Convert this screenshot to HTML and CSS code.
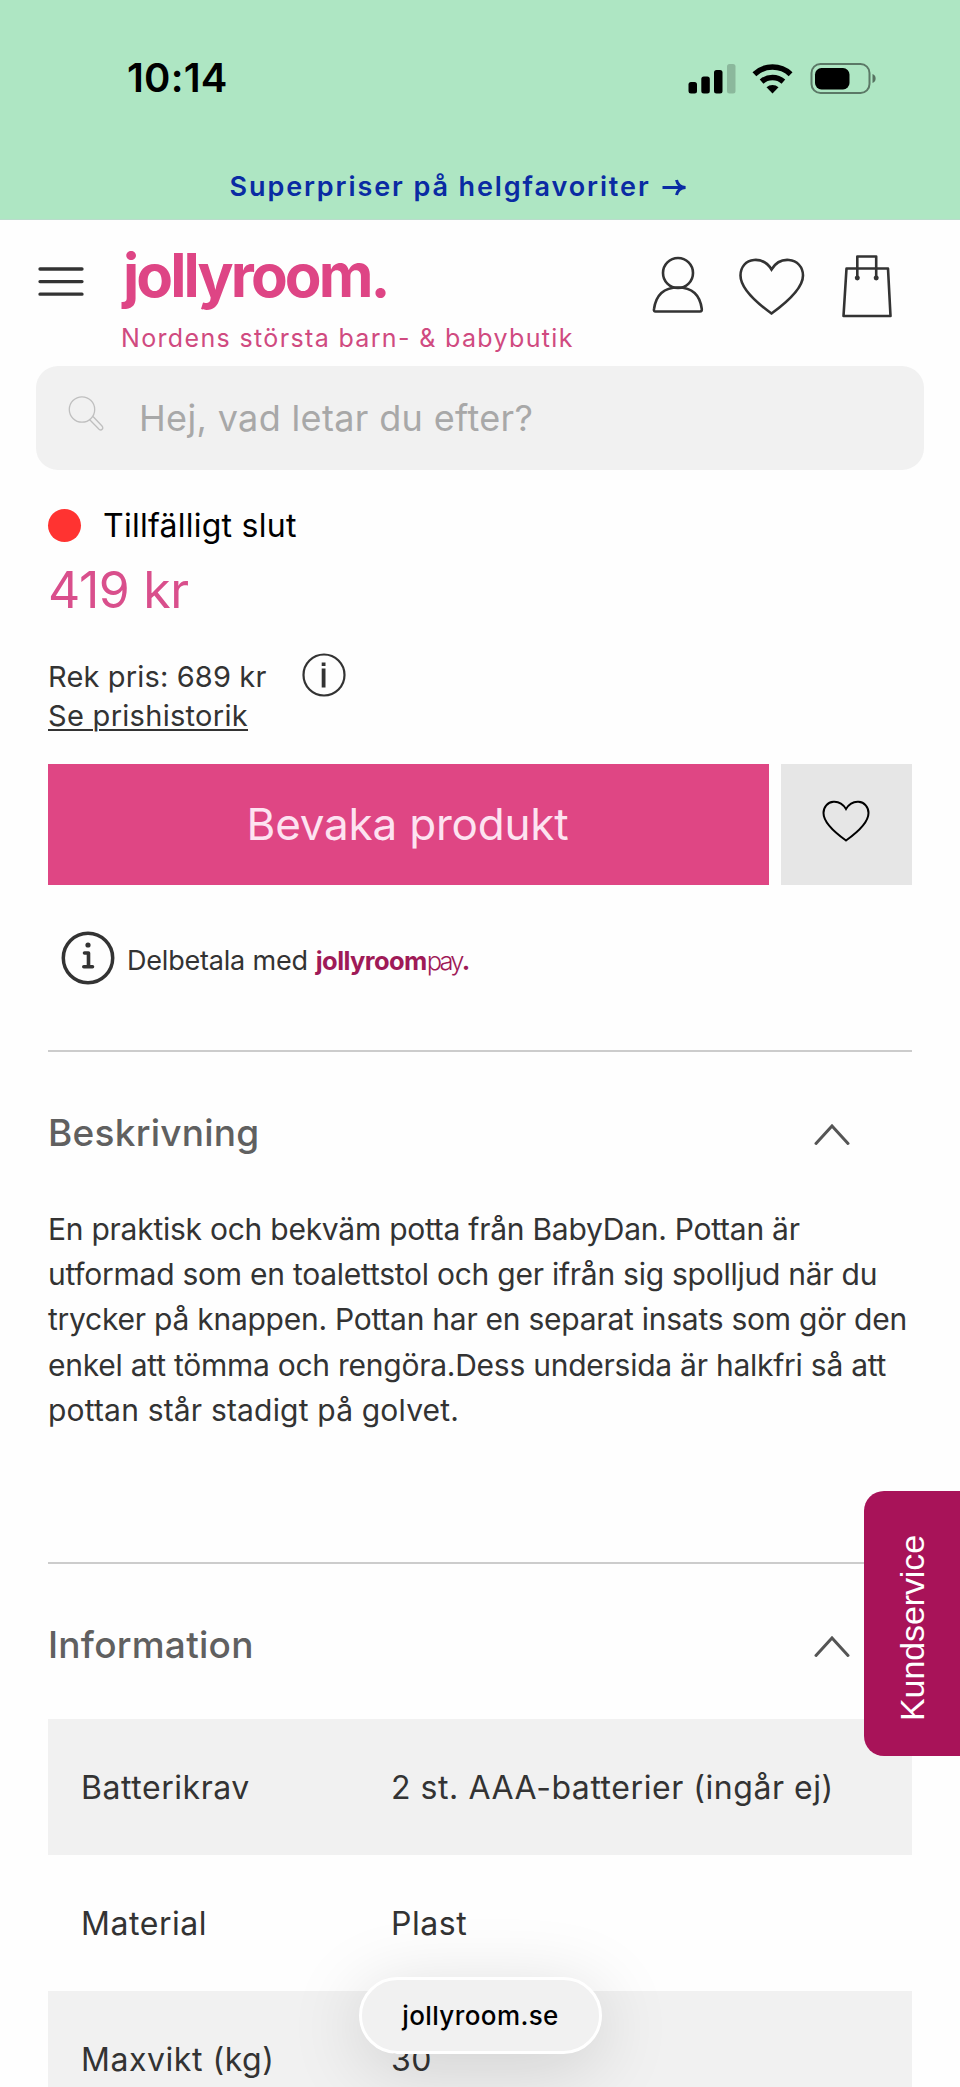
FILE: index.html
```
<!DOCTYPE html>
<html lang="sv">
<head>
<meta charset="utf-8">
<title>Jollyroom</title>
<link rel="stylesheet" href="styles.css">
</head>
<body>
<div class="screen">
  <div class="status">
    <span class="clock">10:14</span>
    <svg class="status-icons" width="192" height="34" viewBox="686 60 192 34">
      <rect x="688.5" y="81" width="8.5" height="11.5" rx="2.5"/>
      <rect x="701.3" y="75.5" width="8.5" height="17" rx="2.5"/>
      <rect x="714" y="69" width="8.5" height="23.5" rx="2.5"/>
      <rect x="727" y="63" width="8.5" height="29.5" rx="2.5" opacity=".2"/>
      <g fill="none" stroke="#000" stroke-width="5.6">
        <path d="M754.4 73.2a26.5 26.5 0 0 1 36.2 0"/>
        <path d="M761.6 80.6a16.5 16.5 0 0 1 21.8 0"/>
      </g>
      <path d="M772.5 92.5l-6-6.200a9 9 0 0 1 12 0z"/>
      <rect x="811.500" y="63" width="58" height="29" rx="9" fill="none" stroke="#000" stroke-width="2" opacity=".48"/>
      <rect x="815" y="67" width="34.500" height="21.500" rx="6.500"/>
      <path d="M872.500 73c4.200 1.500 4.200 7.500 0 9z" opacity=".5"/>
    </svg>
  </div>
  <div class="promo"><span class="promo-text">Superpriser på helgfavoriter</span>
    <svg width="26" height="20" viewBox="0 0 26 20" fill="none" stroke="#0a2ba3" stroke-width="3" ><path d="M1.500 10.500H23M15.500 3Q17 10 24.500 10.500Q17 11 15.500 18"/></svg>
  </div>

  <header class="header">
    <svg class="menu" width="46" height="30" viewBox="0 0 46 30" stroke="#333" stroke-width="3.300" stroke-linecap="round"><path d="M2 2H44M2 14.600H44M2 27.200H44"/></svg>
    <div class="brand">
      <div class="logo">jollyroom.</div>
      <div class="tagline">Nordens största barn- &amp; babybutik</div>
    </div>
    <div class="actions">
      <svg width="56" height="68" viewBox="650 252 56 68"><circle cx="678" cy="273" r="15"/><path d="M655.500 311.500Q653.500 311.500 654 309C656 295 664 287.500 678 287.500S700 295 701.800 309Q702 311.500 700 311.500Z"/></svg>
      <svg width="70" height="68" viewBox="737 252 70 68"><path d="M771.500 269.500C767 262 760 259.500 754 260C746 260.500 740.500 267 740.500 275.500C740.500 289 757 303 771.500 313.500C786 303 803 289 803 275.500C803 267 797 260.500 789 260C783 259.500 776 262 771.500 269.500Z"/></svg>
      <svg class="bag" width="54" height="68" viewBox="840 252 54 68"><path d="M846.500 268.500H888L890.500 316H843.500ZM857.300 277V256.500H876.200V277" stroke-linejoin="round"/><circle cx="857.300" cy="278" r="1.200"/><circle cx="876.200" cy="278" r="1.200"/></svg>
    </div>
  </header>

  <div class="search">
    <svg width="36" height="36" viewBox="68 395 36 36" fill="none" stroke="#bfbfbf" stroke-width="1.300"><circle cx="82" cy="409.500" r="12.700"/><path d="M89.500 419.500L99 429.300C101.500 431.200 104 428.500 102 426L93 416.500"/></svg>
    <span>Hej, vad letar du efter?</span>
  </div>

  <main class="product">
    <div class="stock"><span class="dot"></span>Tillfälligt slut</div>
    <div class="price">419 kr</div>
    <div class="rrp">Rek pris: 689 kr
      <svg width="44" height="44" viewBox="0 0 44 44"><circle cx="22" cy="22" r="20.500" fill="none" stroke="#333" stroke-width="2.200"/><path d="M19.700 9.500h3.800v3.500h-3.800zM19.700 15.500h3.800v19h-3.800z" fill="#333"/></svg>
    </div>
    <a class="history">Se prishistorik</a>
    <div class="buy">
      <div class="watch">Bevaka produkt</div>
      <div class="fav"><svg width="50" height="44" viewBox="0 0 50 44" fill="none" stroke="#000" stroke-width="2"><path d="M25 11C21.700 5.600 17 3.500 12.500 3.800C6.500 4.200 2.500 9 2.500 15C2.500 25 14.500 35 25 42.500C35.500 35 47.500 25 47.500 15C47.500 9 43.500 4.200 37.500 3.800C33 3.500 28.300 5.600 25 11Z"/></svg></div>
    </div>
    <div class="paylater">
      <svg width="54" height="54" viewBox="0 0 54 54"><circle cx="27" cy="27" r="24.700" fill="none" stroke="#333" stroke-width="3.500"/><circle cx="27" cy="14" r="2.600" fill="#333"/><path d="M23.500 22H27.500V35.700M22.800 35.700H31.500" fill="none" stroke="#333" stroke-width="3.600" stroke-linecap="round" stroke-linejoin="round"/></svg>
      <span class="paylater-text">Delbetala med</span>
      <span class="paylogo"><b>jollyroom</b>pay<b>.</b></span>
    </div>

    <section class="section">
      <h2 class="heading">Beskrivning <svg class="chevron" width="36" height="24" viewBox="0 0 36 24"><path d="M2 20.500L18 3L34 20.500"/></svg></h2>
      <p class="text">En praktisk och bekväm potta från BabyDan. Pottan är<br>utformad som en toalettstol och ger ifrån sig spolljud när du<br>trycker på knappen. Pottan har en separat insats som gör den<br>enkel att tömma och rengöra.Dess undersida är halkfri så att<br><span class="text-end">pottan står stadigt på golvet.</span></p>
    </section>

    <section class="section">
      <h2 class="heading">Information <svg class="chevron" width="36" height="24" viewBox="0 0 36 24"><path d="M2 20.500L18 3L34 20.500"/></svg></h2>
      <dl class="specs">
        <div class="spec"><dt>Batterikrav</dt><dd>2 st. AAA-batterier (ingår ej)</dd></div>
        <div class="spec"><dt>Material</dt><dd>Plast</dd></div>
        <div class="spec"><dt>Maxvikt (kg)</dt><dd>30</dd></div>
      </dl>
    </section>
  </main>

  <div class="support">Kundservice</div>
  <div class="urlpill">jollyroom.se</div>
</div>
</body>
</html>
```
FILE: styles.css
```
* { box-sizing: border-box; }
body { margin: 0; background: #fff; font-family: Inter, "Liberation Sans", sans-serif; color: #333; }
svg { display: block; flex: none; }
.screen { position: relative; width: 960px; height: 2087px; overflow: hidden; background: #fefefe; }

.status { display: flex; justify-content: space-between; align-items: center; height: 155px; padding: 0 82px 0 127px; background: #aee6c3; color: #000; }
.clock { font-size: 40px; font-weight: 600; line-height: 48px; letter-spacing: .2px; }
.promo { display: flex; justify-content: center; align-items: center; gap: 10px; height: 65px; padding: 0 44px 1px 0; background: #aee6c3; color: #0a2ba3; border-bottom: 1px solid #b9dccb; }
.promo-text { font-size: 27px; font-weight: 600; line-height: 34px; letter-spacing: 1.9px; }

.header { display: flex; align-items: flex-start; height: 145.5px; padding: 0 66px 0 38px; }
.menu { margin-top: 47px; }
.brand { margin: 25px 0 0 37px; color: #de4585; }
.logo { margin-left: 2px; font-size: 60px; font-weight: 700; line-height: 60px; letter-spacing: -2.9px; white-space: nowrap; }
.tagline { margin-top: 18px; font-size: 25px; line-height: 30px; letter-spacing: 1.35px; color: #d04a80; white-space: nowrap; }
.actions { display: flex; gap: 31px; margin: 32px 0 0 auto; fill: none; stroke: #333; stroke-width: 2.6; }
.bag { margin-left: 2px; }

.search { display: flex; align-items: center; gap: 35px; height: 104.5px; margin: 0 36px; padding: 0 32px; border-radius: 22px; background: #f1f1f1; color: #a8a8a8; font-size: 36px; letter-spacing: .35px; }
.search svg { margin-bottom: 9px; }

.product { padding: 35px 48px 0; }
.stock { display: flex; align-items: center; gap: 22px; height: 40px; color: #000; font-size: 32px; letter-spacing: .25px; }
.dot { width: 33px; height: 33px; border-radius: 50%; background: #ff3331; }
.price { margin-top: 15px; font-size: 50px; line-height: 60px; letter-spacing: -.4px; color: #d94f8c; }
.rrp { display: flex; align-items: center; gap: 36px; height: 44px; margin-top: 34.5px; font-size: 29px; letter-spacing: .15px; }
.rrp svg { margin-bottom: 3px; }
.history { display: block; width: max-content; font-size: 29px; line-height: 34px; letter-spacing: .3px; text-decoration: underline; text-decoration-thickness: 2px; text-underline-offset: 3px; }
.buy { display: grid; grid-template-columns: 721px 131px; gap: 12px; height: 121.5px; margin-top: 31px; }
.watch { display: flex; align-items: center; justify-content: center; padding: 0 2px 0 0; background: #df4684; color: #fde3f1; font-size: 44px; letter-spacing: -.2px; }
.fav { display: flex; align-items: center; justify-content: center; padding-bottom: 8px; padding-right: 1px; background: #e6e6e6; }
.paylater { display: flex; align-items: center; height: 56px; margin: 45px 0 64px 13px; }
.paylater-text { margin: 4px 8px 0 12px; font-size: 27px; letter-spacing: -.2px; }
.paylogo { margin-top: 4px; font-size: 25.5px; font-weight: 300; letter-spacing: -2.8px; color: #9f1a57; }
.paylogo b { font-weight: 700; letter-spacing: -.6px; }

.section { border-top: 2px solid #ccc; padding-top: 49.5px; }
.heading { display: flex; justify-content: space-between; align-items: center; height: 60px; margin: 0; padding: 2px 62px 0 0; font-size: 37px; font-weight: 500; letter-spacing: .25px; color: #606060; }
.chevron { margin-top: 4px; fill: none; stroke: #555; stroke-width: 3; stroke-linecap: round; }
.text { margin: 45px 0 128.5px; font-size: 30px; line-height: 45.4px; letter-spacing: -.25px; white-space: nowrap; }
.text-end { letter-spacing: .18px; }
.specs { margin: 45.5px 0 0; font-size: 32px; letter-spacing: .55px; }
.spec { display: grid; grid-template-columns: 310px 1fr; align-items: center; height: 136px; padding-left: 33px; }
.spec:nth-child(odd) { background: #f1f1f1; }
.spec dd { margin: 0; }

.support { position: absolute; top: 1491px; right: 0; display: flex; align-items: center; justify-content: center; width: 96px; height: 265px; padding-bottom: 10px; border-radius: 0 20px 20px 0; transform: rotate(180deg); background: #a81359; color: #fff; font: 34px "Liberation Sans", sans-serif; letter-spacing: -.1px; writing-mode: vertical-rl; }
.urlpill { position: absolute; left: 359px; top: 1977px; display: flex; align-items: center; justify-content: center; width: 243px; height: 77px; border: 3px solid #fff; border-radius: 39px; background: #f1f1f1; box-shadow: 0 12px 75px rgba(0, 0, 0, .15); color: #000; font-size: 26px; font-weight: 500; letter-spacing: .4px; }
```
